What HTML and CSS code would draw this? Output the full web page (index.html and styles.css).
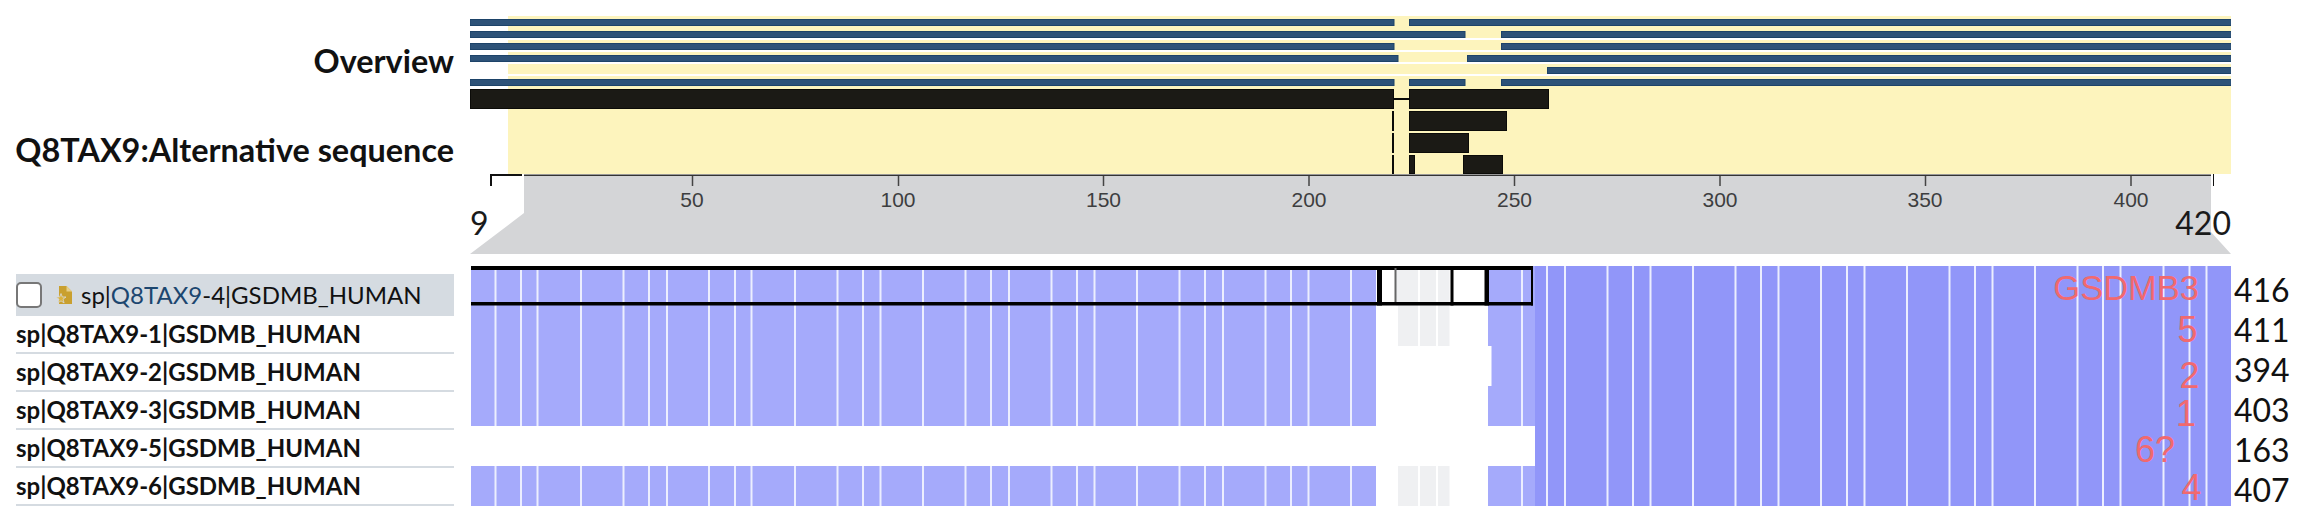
FILE: index.html
```html
<!DOCTYPE html>
<html lang="en">
<head>
<meta charset="utf-8">
<title>Q8TAX9 isoforms</title>
<link rel="stylesheet" href="styles.css">
</head>
<body>
<section class="top">
  <div class="tracks">
    <div class="track-label">Overview</div>
    <div class="track-label alt">Q8TAX9:Alternative sequence</div>
  </div>
  <svg class="overview" viewBox="470 16 1761 238" width="1761" height="238">
    <rect class="yellow" x="508" y="16" width="1723" height="158"/>
    <g class="white">
      <rect x="508" y="38" width="1723" height="2"/>
      <rect x="508" y="50" width="1723" height="2"/>
      <rect x="508" y="62" width="1723" height="2"/>
      <rect x="508" y="74" width="1723" height="2"/>
    </g>
    <g class="blue">
      <rect x="470" y="19.5" width="924" height="6"/><rect x="1409.5" y="19.5" width="822" height="6"/>
      <rect x="470" y="31.5" width="995" height="6"/><rect x="1501.5" y="31.5" width="730" height="6"/>
      <rect x="470" y="43.5" width="924" height="6"/><rect x="1501.5" y="43.5" width="730" height="6"/>
      <rect x="470" y="55.5" width="928" height="6"/><rect x="1467.5" y="55.5" width="764" height="6"/>
      <rect x="1547.5" y="67.5" width="684" height="6"/>
      <rect x="470" y="79.5" width="924" height="6"/><rect x="1409.5" y="79.5" width="55.5" height="6"/><rect x="1501.5" y="79.5" width="730" height="6"/>
    </g>
    <g class="black">
      <rect x="470.5" y="89.5" width="923" height="19"/>
      <rect class="link" x="1394" y="98" width="15" height="2"/>
      <rect x="1409.5" y="89.5" width="139" height="19"/>
      <rect class="link" x="1392" y="111" width="2" height="20"/>
      <rect x="1409.5" y="111.5" width="97" height="19"/>
      <rect class="link" x="1392" y="133" width="2" height="20"/>
      <rect x="1409.5" y="133.5" width="59" height="19"/>
      <rect class="link" x="1392" y="155" width="2" height="19"/>
      <rect x="1409.5" y="155.5" width="5" height="18"/>
      <rect x="1463.5" y="155.5" width="39" height="18"/>
    </g>
    <polygon class="gray" points="524,176 2211,176 2211,232 2231,254 470,254 524,213"/>
    <rect class="axis" x="524" y="174.5" width="1687" height="1.5"/>
    <path class="bracket" d="M491 186V175H522"/>
    <path class="bracket-end" d="M2213.5 174V186"/>
    <g class="ticks">
      <path d="M692.5 176v10M898.5 176v10M1103.5 176v10M1309 176v10M1514.5 176v10M1720 176v10M1925.5 176v10M2131 176v10"/>
    </g>
    <g class="tick-text">
      <text x="692" y="206.5">50</text><text x="898" y="206.5">100</text><text x="1103.5" y="206.5">150</text><text x="1309" y="206.5">200</text><text x="1514.5" y="206.5">250</text><text x="1720" y="206.5">300</text><text x="1925" y="206.5">350</text><text x="2131" y="206.5">400</text>
    </g>
    <text class="end-left" x="470" y="235">9</text>
    <text class="end-right" x="2231" y="235">420</text>
  </svg>
</section>
<section class="msa">
  <ul class="names">
    <li class="name picked">
      <span class="box"></span>
      <svg class="doc" viewBox="0 0 16 18" width="16" height="18">
        <path class="doc-body" d="M3 0H10.5L16 5.5V18H3Z"/>
        <path class="doc-fold" d="M10.5 0V5.5H16Z"/>
        <path class="doc-star" d="M5 7.5L6.3 11H10L7 13.2L8.1 17L5 14.8L1.9 17L3 13.2L0 11H3.7Z"/>
      </svg>
      <span class="seq">sp|<a class="acc">Q8TAX9</a>-4|GSDMB_HUMAN</span>
    </li>
    <li class="name">sp|Q8TAX9-1|GSDMB_HUMAN</li>
    <li class="name">sp|Q8TAX9-2|GSDMB_HUMAN</li>
    <li class="name">sp|Q8TAX9-3|GSDMB_HUMAN</li>
    <li class="name">sp|Q8TAX9-5|GSDMB_HUMAN</li>
    <li class="name">sp|Q8TAX9-6|GSDMB_HUMAN</li>
  </ul>
  <svg class="align" viewBox="471 266 1760 240" width="1760" height="240">
    <rect class="c1" x="471" y="266" width="1064" height="240"/>
    <rect class="c2" x="1535" y="266" width="696" height="240"/>
    <g class="st">
      <rect x="494.5" y="266" width="2" height="240"/><rect x="520" y="266" width="2" height="240"/><rect x="536.5" y="266" width="2" height="240"/><rect x="580" y="266" width="2" height="240"/>
      <rect x="622.5" y="266" width="2" height="240"/><rect x="648" y="266" width="2" height="240"/><rect x="666" y="266" width="2" height="240"/><rect x="708" y="266" width="2" height="240"/>
      <rect x="734" y="266" width="2" height="240"/><rect x="750.5" y="266" width="2" height="240"/><rect x="794" y="266" width="2" height="240"/><rect x="836.5" y="266" width="2" height="240"/>
      <rect x="862" y="266" width="2" height="240"/><rect x="879.5" y="266" width="2" height="240"/><rect x="922" y="266" width="2" height="240"/><rect x="964.5" y="266" width="2" height="240"/>
      <rect x="990" y="266" width="2" height="240"/><rect x="1008" y="266" width="2" height="240"/><rect x="1050.5" y="266" width="2" height="240"/><rect x="1076" y="266" width="2" height="240"/>
      <rect x="1093.5" y="266" width="2" height="240"/><rect x="1136" y="266" width="2" height="240"/><rect x="1178.5" y="266" width="2" height="240"/><rect x="1204" y="266" width="2" height="240"/>
      <rect x="1222" y="266" width="2" height="240"/><rect x="1264.5" y="266" width="2" height="240"/><rect x="1290" y="266" width="2" height="240"/><rect x="1307.5" y="266" width="2" height="240"/>
      <rect x="1350" y="266" width="2" height="240"/><rect x="1521" y="266" width="2" height="240"/><rect x="1546" y="266" width="2" height="240"/><rect x="1564" y="266" width="2" height="240"/>
      <rect x="1606.5" y="266" width="2" height="240"/><rect x="1632" y="266" width="2" height="240"/><rect x="1649.5" y="266" width="2" height="240"/><rect x="1692" y="266" width="2" height="240"/>
      <rect x="1734.5" y="266" width="2" height="240"/><rect x="1760" y="266" width="2" height="240"/><rect x="1777.5" y="266" width="2" height="240"/><rect x="1820" y="266" width="2" height="240"/>
      <rect x="1846" y="266" width="2" height="240"/><rect x="1863.5" y="266" width="2" height="240"/><rect x="1906" y="266" width="2" height="240"/><rect x="1948.5" y="266" width="2" height="240"/>
      <rect x="1974" y="266" width="2" height="240"/><rect x="1991.5" y="266" width="2" height="240"/><rect x="2034" y="266" width="2" height="240"/><rect x="2076.5" y="266" width="2" height="240"/>
      <rect x="2102" y="266" width="2" height="240"/><rect x="2119.5" y="266" width="2" height="240"/><rect x="2162.5" y="266" width="2" height="240"/><rect x="2188.5" y="266" width="2" height="240"/>
      <rect x="2205.5" y="266" width="2" height="240"/>
    </g>
    <g class="gap">
      <rect x="1376" y="266" width="112" height="80"/>
      <rect x="1376" y="346" width="115.5" height="40"/>
      <rect x="1376" y="386" width="112" height="40"/>
      <rect x="471" y="426" width="1064" height="40"/>
      <rect x="1376" y="466" width="112" height="40"/>
    </g>
    <g class="soft">
      <rect x="1398" y="266" width="20" height="80"/><rect x="1420" y="266" width="16" height="80"/><rect x="1438" y="266" width="11.5" height="80"/>
      <rect x="1398" y="466" width="20" height="40"/><rect x="1420" y="466" width="16" height="40"/><rect x="1438" y="466" width="11.5" height="40"/>
      <rect x="1396" y="266" width="2" height="40"/>
    </g>
    <g class="frame">
      <rect x="471" y="266" width="1062" height="4"/>
      <rect x="471" y="302" width="1062" height="3.5"/>
      <rect x="1531" y="266" width="2" height="39.5"/>
      <rect x="1377" y="266" width="5" height="39.5"/>
      <rect x="1484.5" y="266" width="4.5" height="39.5"/>
      <rect x="1450.5" y="266" width="3" height="39.5"/>
      <rect class="hair" x="1394.5" y="268" width="2" height="34"/>
    </g>
    <g class="tag">
      <text class="wide" x="2199" y="300">GSDMB3</text>
      <text x="2197.5" y="342">5</text>
      <text x="2199.5" y="388">2</text>
      <text x="2196" y="426">1</text>
      <text x="2175" y="462">6?</text>
      <text x="2201.5" y="500">4</text>
    </g>
  </svg>
  <ol class="counts">
    <li>416</li><li>411</li><li>394</li><li>403</li><li>163</li><li>407</li>
  </ol>
</section>
</body>
</html>
```
FILE: styles.css
```css
* { box-sizing: border-box; }
html, body { margin: 0; padding: 0; background: #fff; }
body { width: 2308px; height: 524px; overflow: hidden; font-family: "Lato", "Liberation Sans", sans-serif; color: #111; }

.top { display: flex; padding-top: 16px; height: 254px; }
.tracks { width: 470px; padding: 24px 16px 0 0; display: flex; flex-direction: column; align-items: flex-end; gap: 48px; }
.track-label { font-size: 32.4px; font-weight: 700; line-height: 41px; white-space: nowrap; }
.overview { display: block; flex: none; }

.yellow { fill: #fdf4bd; }
.white rect { fill: #fff; }
.blue rect { fill: #2d5278; stroke: #1d4369; stroke-width: 1; }
.black rect { fill: #1b1a15; stroke: #0b0b08; stroke-width: 1; }
.black .link { fill: #0b0b08; stroke: none; }
.gray { fill: #d4d5d7; }
.axis { fill: #333; }
.bracket { fill: none; stroke: #111; stroke-width: 2; }
.bracket-end { fill: none; stroke: #111; stroke-width: 1; }
.ticks path { stroke: #444; stroke-width: 1.5; fill: none; }
.tick-text text { font-family: "Liberation Sans", sans-serif; font-size: 21px; fill: #3d3e40; text-anchor: middle; }
.end-left, .end-right { font-size: 32px; fill: #1a1a1a; }
.end-right { text-anchor: end; }

.msa { display: flex; padding-top: 12px; height: 252px; }
.names { list-style: none; margin: 8px 0 0 16px; padding: 0; width: 438px; flex: none; }
.name { height: 38px; border-bottom: 2px solid #d5dbe1; font-size: 24px; font-weight: 700; line-height: 36px; white-space: nowrap; }
.picked { height: 42px; background: #d5dbe1; border-bottom: 0; font-weight: 400; line-height: 42px; display: flex; align-items: center; }
.box { width: 26px; height: 26px; background: #fff; border: 2px solid #777; border-radius: 5px; flex: none; }
.doc { margin: 0 9px 0 14px; flex: none; }
.doc-body { fill: #c9a02f; }
.doc-fold { fill: #e6cf8a; }
.doc-star { fill: #dcb33d; stroke: #d5dbe1; stroke-width: .8; }
.acc { color: #1c466f; }
.align { display: block; flex: none; margin-left: 17px; overflow: visible; }
.c1 { fill: #a5aafb; }
.c2 { fill: #9196f9; }
.st { filter: blur(.5px); }
.st rect { fill: #eceefe; }
.gap rect { fill: #fff; }
.soft rect { fill: #eff0f2; }
.frame rect { fill: #000; }
.frame .hair { fill: #666; }
.tag text { font-family: "Liberation Sans", sans-serif; font-size: 36px; fill: #f1696f; text-anchor: end; }
.tag .wide { font-size: 34.5px; }
.counts { list-style: none; margin: 0 0 0 3px; padding: 4px 0 0; flex: none; }
.counts li { height: 40px; font-size: 32px; line-height: 40px; color: #111; }
```
